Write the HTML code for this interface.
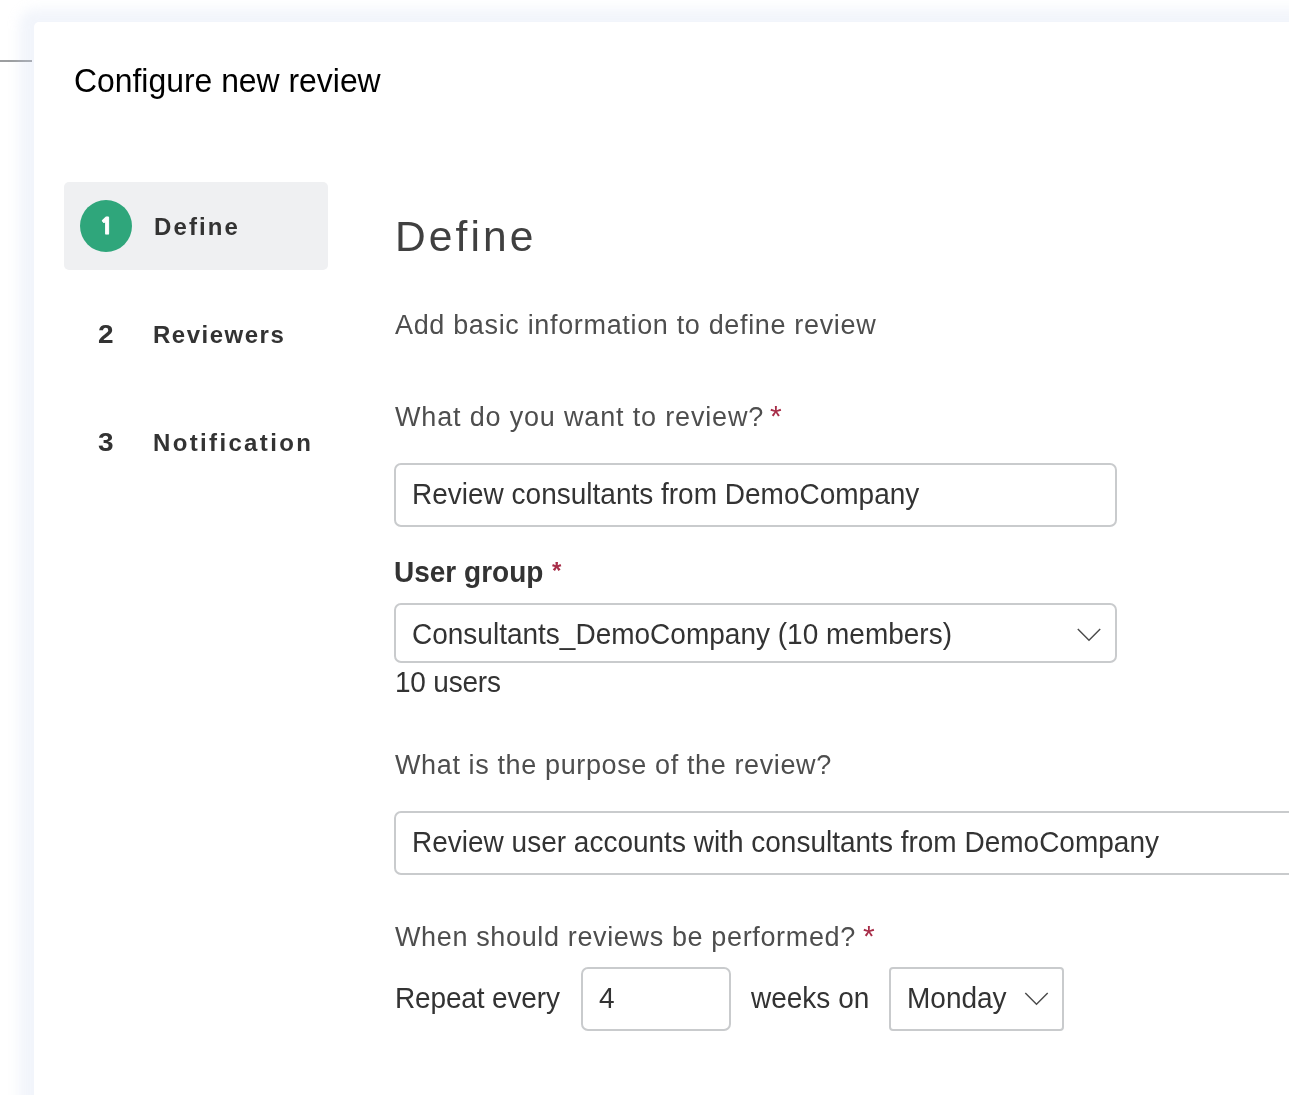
<!DOCTYPE html>
<html lang="en">
<head>
<meta charset="utf-8">
<title>Configure new review</title>
<style>
*{box-sizing:border-box;margin:0;padding:0}
html,body{width:1289px;height:1095px;overflow:hidden;background:#fff}
body{font-family:"Liberation Sans",Arial,sans-serif;color:#333;position:relative}
.bgline{position:absolute;left:0;top:60px;width:32px;height:2px;background:#9c9ea0}
.modal{position:absolute;left:34px;top:21.5px;width:1400px;height:1200px;background:#fff;border-radius:5px;
  box-shadow:0 2px 12px 15px rgba(205,215,240,.26)}
.abs{position:absolute;white-space:nowrap;line-height:1;will-change:transform}
.title{left:74px;top:65px;font-size:31.9px;color:#000;transform:scaleY(1.03);transform-origin:0 3.6px}
.step-bg{position:absolute;left:64px;top:182px;width:264px;height:88px;background:#eff0f2;border-radius:5px}
.circle{position:absolute;left:80px;top:200px;width:52px;height:52px;border-radius:50%;background:#2fa67b}
.stepnum{font-weight:bold;font-size:24px;color:#333}
.steplbl{font-weight:bold;font-size:24px;color:#333}
.h1{left:395px;top:216px;font-size:42.5px;color:#404040;letter-spacing:3.1px}
.nun{font-size:27px;color:#4e4e4e;letter-spacing:.66px}
.ast{font-size:30px;color:#a72d48}
.ari{font-size:28px;color:#333;transform:scaleY(1.025);transform-origin:0 23px}
.req{color:#a3313f}
.box{position:absolute;border:2px solid #c9cbcd;border-radius:7px;background:#fff}
</style>
</head>
<body>
<div class="bgline"></div>
<div class="modal"></div>

<div class="abs title">Configure new review</div>

<div class="step-bg"></div>
<div class="circle"></div>
<div class="abs stepnum" style="left:100px;top:207px;color:#fff;font-family:'NanumGothic','Liberation Sans',sans-serif;font-weight:800;font-size:22px;line-height:38px;-webkit-text-stroke:.9px #fff">1</div>
<div class="abs steplbl" style="left:153.5px;top:215px;letter-spacing:2.1px">Define</div>
<div class="abs stepnum" style="left:98px;top:322px;font-size:25px;transform:scaleX(1.12);transform-origin:0 0">2</div>
<div class="abs steplbl" style="left:153px;top:323px;letter-spacing:1.5px">Reviewers</div>
<div class="abs stepnum" style="left:98px;top:430px;font-size:25px;transform:scaleX(1.12);transform-origin:0 0">3</div>
<div class="abs steplbl" style="left:153px;top:431px;letter-spacing:2.35px">Notification</div>

<div class="abs h1">Define</div>
<div id="sub" class="abs nun" style="left:394.7px;top:312px;letter-spacing:.66px">Add basic information to define review</div>
<div id="q1" class="abs nun" style="left:394.7px;top:404px;letter-spacing:.83px">What do you want to review?</div>
<div class="abs ast" style="left:770px;top:401px">*</div>

<div class="box" style="left:394px;top:463px;width:723px;height:64px"></div>
<div class="abs ari" style="left:412px;top:481px">Review consultants from DemoCompany</div>

<div class="abs ari" style="left:394px;top:559px;font-weight:bold">User group</div>
<div class="abs ast" style="left:551.6px;top:558.8px;font-size:24px;font-weight:bold">*</div>

<div class="box" style="left:394px;top:603px;width:723px;height:60px"></div>
<div class="abs ari" style="left:412px;top:621px">Consultants_DemoCompany (10 members)</div>
<svg class="abs" style="left:1075px;top:626px" width="28" height="18" viewBox="0 0 28 18"><path d="M2.8 3.1 L14 14.2 L25.2 3.1" fill="none" stroke="#4a4a4a" stroke-width="1.45" stroke-linecap="butt" stroke-linejoin="miter"/></svg>

<div class="abs ari" style="left:395px;top:669px;letter-spacing:-.2px">10 users</div>

<div id="q2" class="abs nun" style="left:394.7px;top:752px;letter-spacing:.62px">What is the purpose of the review?</div>
<div class="box" style="left:394px;top:811px;width:960px;height:64px"></div>
<div class="abs ari" style="left:412px;top:829px">Review user accounts with consultants from DemoCompany</div>

<div id="q3" class="abs nun" style="left:394.7px;top:924px;letter-spacing:.64px">When should reviews be performed?</div>
<div class="abs ast" style="left:863.3px;top:921px">*</div>

<div class="abs ari" style="left:394.5px;top:985px;letter-spacing:-.15px">Repeat every</div>
<div class="box" style="left:581px;top:967px;width:150px;height:64px"></div>
<div class="abs ari" style="left:598.5px;top:985px">4</div>
<div class="abs ari" style="left:750.6px;top:985px">weeks on</div>
<div class="box" style="left:889px;top:967px;width:175px;height:64px;border-radius:4px"></div>
<div class="abs ari" style="left:907px;top:985px">Monday</div>
<svg class="abs" style="left:1023px;top:990px" width="28" height="18" viewBox="0 0 28 18"><path d="M2.3 3.1 L13.5 14.2 L24.7 3.1" fill="none" stroke="#4a4a4a" stroke-width="1.45" stroke-linecap="butt" stroke-linejoin="miter"/></svg>
</body>
</html>
